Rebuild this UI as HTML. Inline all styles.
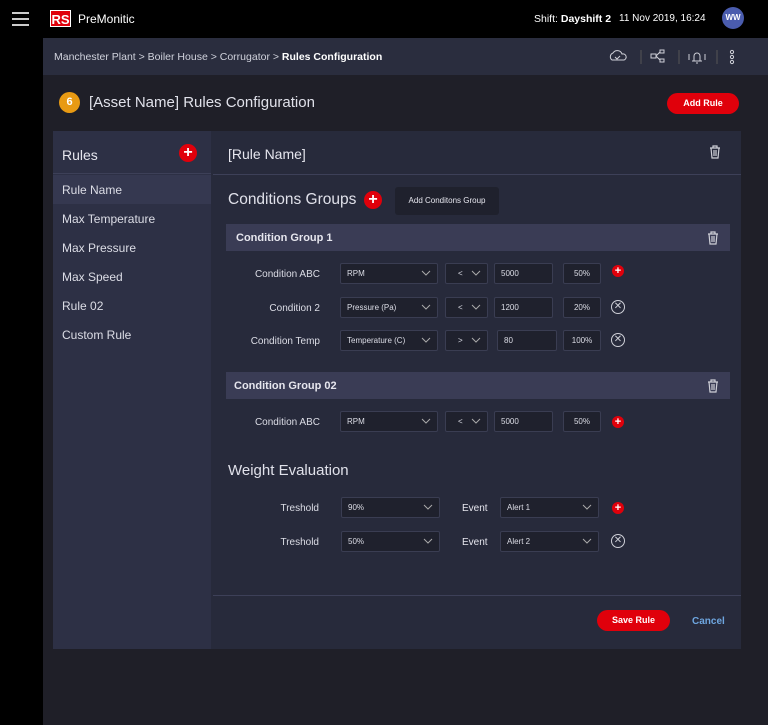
<!DOCTYPE html><html><head><style>
*{margin:0;padding:0;box-sizing:border-box}
body{width:768px;height:725px;background:#1f1f28;font-family:"Liberation Sans",sans-serif;color:#e6e6ee;position:relative;overflow:hidden}
.a{position:absolute}
.top{left:0;top:0;width:768px;height:38px;background:#000}
.strip{left:0;top:0;width:43px;height:725px;background:#000}
.bc{left:43px;top:38px;width:725px;height:37px;background:#2a2d3e;font-size:10.5px;color:#d0d2dc}
.card{left:53px;top:131px;width:688px;height:518px;background:#272a3b}
.lp{left:53px;top:131px;width:158px;height:518px;background:#2d3045}
.li{left:53px;width:158px;height:29px;font-size:12px;line-height:31px;padding-left:9px;color:#dcdde6}
.plus{width:18px;height:18px;border-radius:50%;background:#e0000b;color:#fff;font-weight:bold;text-align:center;line-height:18px;font-size:16px}
.sp{width:12px;height:12px;font-size:11px;line-height:12px}
.lab{font-size:10px;color:#dcdde6;text-align:right;width:100px}
.in{height:21px;background:#1f212d;border:1px solid #3a3d52;border-radius:2px;font-size:8px;line-height:19px;padding-left:6px;color:#dcdde6}
.in svg{position:absolute;right:6px;top:6px}
.gh{left:226px;width:504px;height:27px;background:#3a3c55;font-size:11px;font-weight:bold;line-height:29px;padding-left:10px}
.x{width:14px;height:14px;border:1px solid #cfd0d8;border-radius:50%;font-size:10px;line-height:12px;text-align:center;color:#cfd0d8}
.btn{background:#e0000b;border-radius:12px;color:#fff;font-size:9px;font-weight:bold;text-align:center}
</style></head><body>
<div class="a top"></div><div class="a strip"></div>
<div class="a" style="left:12px;top:12px;width:17px;height:1.5px;background:#ccc;box-shadow:0 6px 0 #ccc,0 12px 0 #ccc"></div>
<div class="a" style="left:50px;top:10px;width:21px;height:17px;background:#e0000b;color:#fff;font-weight:bold;font-size:13px;line-height:17px;text-align:center;border:1px solid #fff">RS</div>
<div class="a" style="left:78px;top:12px;font-size:12px;color:#fff">PreMonitic</div>
<div class="a" style="left:534px;top:13px;font-size:10.5px;color:#fff">Shift: <b>Dayshift 2</b></div>
<div class="a" style="left:619px;top:13px;font-size:10px;color:#fff">11 Nov 2019, 16:24</div>
<div class="a" style="left:722px;top:7px;width:22px;height:22px;border-radius:50%;background:#4a5cae;color:#fff;font-size:8px;font-weight:bold;text-align:center;line-height:22px">WW</div>
<div class="a bc"><span class="a" style="left:11px;top:13px;white-space:nowrap">Manchester Plant &gt; Boiler House &gt; Corrugator &gt; <b style="color:#fff">Rules Configuration</b></span>
<svg class="a" style="left:565px;top:10px" width="160" height="18" fill="none" stroke="#cfd0d8" stroke-width="1">
<path d="M4 12 a4 4 0 0 1 1-7 a5 5 0 0 1 9 1 a3 3 0 0 1 2 6z M7 9 l2 2 3-3"/>
<line x1="33" y1="2" x2="33" y2="16" stroke="#555"/>
<rect x="43" y="6" width="5" height="4"/><rect x="52" y="2" width="4" height="3"/><rect x="52" y="11" width="4" height="3"/><path d="M48 8 L52 4 M48 8 L52 12"/>
<line x1="71" y1="2" x2="71" y2="16" stroke="#555"/>
<path d="M86 13 V8 a3 3 0 0 1 6 0 V13 z M84 13 h10 M88 15 h2 M81 6 v6 M97 6 v6"/>
<line x1="109" y1="2" x2="109" y2="16" stroke="#555"/>
<circle cx="124" cy="4" r="1.6"/><circle cx="124" cy="9" r="1.6"/><circle cx="124" cy="14" r="1.6"/></svg></div>
<div class="a" style="left:59px;top:92px;width:21px;height:21px;border-radius:50%;background:#e89a13;color:#fff;font-size:11px;font-weight:bold;text-align:center;line-height:21px">6</div>
<div class="a" style="left:89px;top:94px;font-size:15px;color:#e0e1ea">[Asset Name] Rules Configuration</div>
<div class="a btn" style="left:667px;top:93px;width:72px;height:21px;line-height:21px">Add Rule</div>
<div class="a card"></div><div class="a lp"></div>
<div class="a" style="left:62px;top:147px;font-size:14px">Rules</div>
<div class="a plus" style="left:179px;top:144px">+</div>
<div class="a" style="left:53px;top:173px;width:158px;height:1px;background:#3d4058"></div>
<div class="a li" style="top:175px;background:#353850">Rule Name</div>
<div class="a li" style="top:204px">Max Temperature</div>
<div class="a li" style="top:233px">Max Pressure</div>
<div class="a li" style="top:262px">Max Speed</div>
<div class="a li" style="top:291px">Rule 02</div>
<div class="a li" style="top:320px">Custom Rule</div>
<div class="a" style="left:228px;top:146px;font-size:14px">[Rule Name]</div>
<svg class="a" style="left:709px;top:145px" width="12" height="14" fill="none" stroke="#cfd0d8" stroke-width="1.2"><path d="M1 3h10M4 3V1h4v2M2 3l1 10h6l1-10M5 5v6M7 5v6"/></svg>
<div class="a" style="left:213px;top:174px;width:528px;height:1px;background:#3d4058"></div>
<div class="a" style="left:228px;top:191px;font-size:15.5px;color:#e0e1ea">Conditions Groups</div>
<div class="a plus" style="left:364px;top:191px">+</div>
<div class="a" style="left:395px;top:187px;width:104px;height:28px;background:#1f212d;border-radius:3px;font-size:8px;line-height:28px;text-align:center">Add Conditons Group</div>
<div class="a gh" style="top:224px">Condition Group 1</div>
<div class="a gh" style="top:372px;padding-left:8px">Condition Group 02</div>
<svg class="a" style="left:707px;top:231px" width="12" height="14" fill="none" stroke="#cfd0d8" stroke-width="1.2"><path d="M1 3h10M4 3V1h4v2M2 3l1 10h6l1-10M5 5v6M7 5v6"/></svg>
<svg class="a" style="left:707px;top:379px" width="12" height="14" fill="none" stroke="#cfd0d8" stroke-width="1.2"><path d="M1 3h10M4 3V1h4v2M2 3l1 10h6l1-10M5 5v6M7 5v6"/></svg>

<div class="a lab" style="left:220px;top:269px">Condition ABC</div>
<div class="a in" style="left:340px;top:263px;width:98px">RPM<svg width="10" height="6"><path d="M1 1l4 4 4-4" stroke="#aaa" fill="none"/></svg></div>
<div class="a in" style="left:445px;top:263px;width:43px;padding-left:12px">&lt;<svg width="10" height="6"><path d="M1 1l4 4 4-4" stroke="#aaa" fill="none"/></svg></div>
<div class="a in" style="left:494px;top:263px;width:59px">5000</div>
<div class="a in" style="left:563px;top:263px;width:38px;text-align:center;padding:0">50%</div>
<div class="a plus sp" style="left:612px;top:265px">+</div>

<div class="a lab" style="left:220px;top:303px">Condition 2</div>
<div class="a in" style="left:340px;top:297px;width:98px">Pressure (Pa)<svg width="10" height="6"><path d="M1 1l4 4 4-4" stroke="#aaa" fill="none"/></svg></div>
<div class="a in" style="left:445px;top:297px;width:43px;padding-left:12px">&lt;<svg width="10" height="6"><path d="M1 1l4 4 4-4" stroke="#aaa" fill="none"/></svg></div>
<div class="a in" style="left:494px;top:297px;width:59px">1200</div>
<div class="a in" style="left:563px;top:297px;width:38px;text-align:center;padding:0">20%</div>
<div class="a x" style="left:611px;top:300px">✕</div>

<div class="a lab" style="left:220px;top:336px">Condition Temp</div>
<div class="a in" style="left:340px;top:330px;width:98px">Temperature (C)<svg width="10" height="6"><path d="M1 1l4 4 4-4" stroke="#aaa" fill="none"/></svg></div>
<div class="a in" style="left:445px;top:330px;width:43px;padding-left:12px">&gt;<svg width="10" height="6"><path d="M1 1l4 4 4-4" stroke="#aaa" fill="none"/></svg></div>
<div class="a in" style="left:497px;top:330px;width:60px">80</div>
<div class="a in" style="left:563px;top:330px;width:38px;text-align:center;padding:0">100%</div>
<div class="a x" style="left:611px;top:333px">✕</div>

<div class="a lab" style="left:220px;top:417px">Condition ABC</div>
<div class="a in" style="left:340px;top:411px;width:98px">RPM<svg width="10" height="6"><path d="M1 1l4 4 4-4" stroke="#aaa" fill="none"/></svg></div>
<div class="a in" style="left:445px;top:411px;width:43px;padding-left:12px">&lt;<svg width="10" height="6"><path d="M1 1l4 4 4-4" stroke="#aaa" fill="none"/></svg></div>
<div class="a in" style="left:494px;top:411px;width:59px">5000</div>
<div class="a in" style="left:563px;top:411px;width:38px;text-align:center;padding:0">50%</div>
<div class="a plus sp" style="left:612px;top:416px">+</div>

<div class="a" style="left:228px;top:462px;font-size:15px;color:#e0e1ea">Weight Evaluation</div>
<div class="a lab" style="left:219px;top:503px">Treshold</div>
<div class="a in" style="left:341px;top:497px;width:99px">90%<svg width="10" height="6"><path d="M1 1l4 4 4-4" stroke="#aaa" fill="none"/></svg></div>
<div class="a" style="left:462px;top:503px;font-size:10px">Event</div>
<div class="a in" style="left:500px;top:497px;width:99px">Alert 1<svg width="10" height="6"><path d="M1 1l4 4 4-4" stroke="#aaa" fill="none"/></svg></div>
<div class="a plus sp" style="left:612px;top:502px">+</div>
<div class="a lab" style="left:219px;top:537px">Treshold</div>
<div class="a in" style="left:341px;top:531px;width:99px">50%<svg width="10" height="6"><path d="M1 1l4 4 4-4" stroke="#aaa" fill="none"/></svg></div>
<div class="a" style="left:462px;top:537px;font-size:10px">Event</div>
<div class="a in" style="left:500px;top:531px;width:99px">Alert 2<svg width="10" height="6"><path d="M1 1l4 4 4-4" stroke="#aaa" fill="none"/></svg></div>
<div class="a x" style="left:611px;top:534px">✕</div>

<div class="a" style="left:213px;top:595px;width:528px;height:1px;background:#3d4058"></div>
<div class="a btn" style="left:597px;top:610px;width:73px;height:21px;line-height:21px">Save Rule</div>
<div class="a" style="left:692px;top:616px;font-size:10px;font-weight:bold;color:#6ea6e0">Cancel</div>
</body></html>
